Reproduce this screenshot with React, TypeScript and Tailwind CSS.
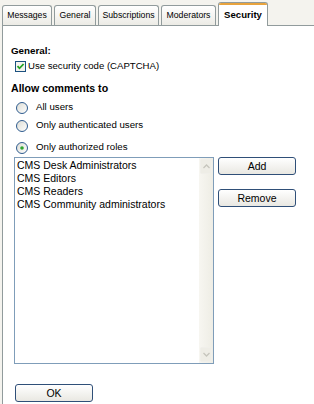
import React from 'react';

const tabs = [
  { label: 'Messages', w: 'w-[50px]' },
  { label: 'General', w: 'w-[42px]' },
  { label: 'Subscriptions', w: 'w-[61px]' },
  { label: 'Moderators', w: 'w-[55px]' },
];

const roles = ['CMS Desk Administrators', 'CMS Editors', 'CMS Readers', 'CMS Community administrators'];

function Radio({ checked }: { checked?: boolean }) {
  return (
    <svg width="12" height="12" viewBox="0 0 12 12" className="shrink-0">
      <defs>
        <linearGradient id="rg" x1="0" y1="0" x2="1" y2="1">
          <stop offset="0" stopColor="#dcdcd4" />
          <stop offset="1" stopColor="#ffffff" />
        </linearGradient>
      </defs>
      <circle cx="6" cy="6" r="5.5" fill="url(#rg)" stroke="#2f5c8f" strokeWidth="1" />
      {checked && <circle cx="6" cy="6" r="1.8" fill="#31a52f" />}
    </svg>
  );
}

function XpButton({ children, className }: { children: React.ReactNode; className?: string }) {
  return (
    <button className={`h-[18px] rounded-[3px] border border-[#2f4f78] bg-gradient-to-b from-[#ffffff] to-[#e9e8e2] text-[10.5px] leading-none text-black ${className ?? ''}`}>
      {children}
    </button>
  );
}

export default function App() {
  return (
    <div className="w-[314px] h-[404px] overflow-hidden bg-[#f4f3ee] flex flex-col" style={{ fontFamily: '"Liberation Sans", Arial, sans-serif' }}>
      <div className="flex items-end h-[25px] pl-[2px] gap-[2px] shrink-0">
        {tabs.map((t) => (
          <div
            key={t.label}
            className={`${t.w} h-[20px] flex items-center justify-center border border-b-0 border-[#919b9c] rounded-t-[3px] bg-gradient-to-b from-[#ffffff] to-[#ecebe5] text-[8.7px] text-black`}
          >
            {t.label}
          </div>
        ))}
        <div className="relative z-10 -mb-px w-[50px] h-[24px] flex flex-col border border-b-0 border-[#919b9c] rounded-t-[3px] bg-white overflow-hidden">
          <div className="h-[2px] bg-[#e8a33d] shrink-0" />
          <div className="flex-1 flex items-center justify-center pb-[1px] text-[9.6px] font-bold text-black">Security</div>
        </div>
      </div>

      <div className="flex-1 ml-[2px] border-l border-t border-[#919b9c] bg-white pl-[8px] text-black">
        <div className="mt-[19px] h-[12px] text-[9.8px] leading-[12px] font-bold">General:</div>
        <div className="mt-[3px] ml-[4px] h-[12px] flex items-center gap-[2px]">
          <svg width="11" height="11" viewBox="0 0 11 11" className="shrink-0">
            <rect x="0.5" y="0.5" width="10" height="10" fill="#f4f4ef" stroke="#1c5180" />
            <path d="M2.5 5.2 L4.5 7.3 L8.6 3" fill="none" stroke="#21a121" strokeWidth="1.8" />
          </svg>
          <span className="text-[9.6px] leading-[12px]">Use security code (CAPTCHA)</span>
        </div>

        <div className="mt-[10px] h-[13px] text-[10.6px] leading-[13px] font-bold">Allow comments to</div>

        <div className="mt-[6px] ml-[5px] h-[13px] flex items-center gap-[8px]">
          <Radio />
          <span className="text-[9.7px]">All users</span>
        </div>
        <div className="mt-[5px] ml-[5px] h-[13px] flex items-center gap-[8px]">
          <Radio />
          <span className="text-[9.7px]">Only authenticated users</span>
        </div>
        <div className="mt-[9px] ml-[5px] h-[13px] flex items-center gap-[8px]">
          <Radio checked />
          <span className="text-[9.7px]">Only authorized roles</span>
        </div>

        <div className="mt-[3px] ml-[3px] flex gap-[4px]">
          <div className="w-[200px] h-[207px] border border-[#7f9db9] bg-white flex">
            <div className="flex-1 pl-[2px] pt-[1px]">
              {roles.map((r) => (
                <div key={r} className="h-[13px] text-[10.5px] leading-[13px] whitespace-nowrap">{r}</div>
              ))}
            </div>
            <div className="w-[14px] flex flex-col bg-gradient-to-r from-[#f7f6f1] to-[#eeede5]">
              <div className="h-[15px] m-px rounded-[2px] bg-[#eeede6] border border-[#f0efea] flex items-center justify-center">
                <svg width="7" height="5" viewBox="0 0 7 5">
                  <path d="M0.5 4 L3.5 1 L6.5 4" fill="none" stroke="#c6c5bd" strokeWidth="1.3" />
                </svg>
              </div>
              <div className="flex-1" />
              <div className="h-[15px] m-px rounded-[2px] bg-[#eeede6] border border-[#f0efea] flex items-center justify-center">
                <svg width="7" height="5" viewBox="0 0 7 5">
                  <path d="M0.5 1 L3.5 4 L6.5 1" fill="none" stroke="#c6c5bd" strokeWidth="1.3" />
                </svg>
              </div>
            </div>
          </div>
          <div className="flex flex-col gap-[14px]">
            <XpButton className="w-[78px]">Add</XpButton>
            <XpButton className="w-[78px]">Remove</XpButton>
          </div>
        </div>

        <div className="mt-[16px] ml-[4px]">
          <XpButton className="w-[78px]">OK</XpButton>
        </div>
      </div>
    </div>
  );
}
